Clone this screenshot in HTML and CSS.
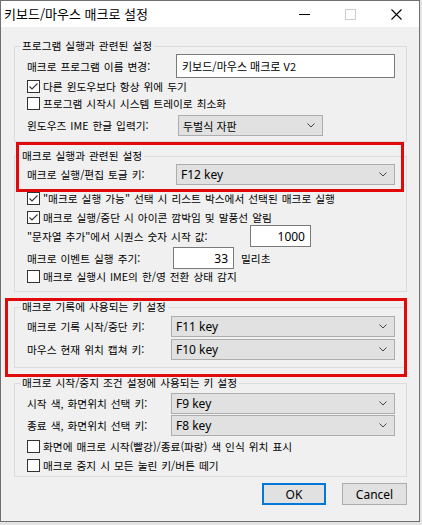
FILE: index.html
```html
<!DOCTYPE html>
<html lang="ko">
<head>
<meta charset="utf-8">
<title>키보드/마우스 매크로 설정</title>
<link rel="stylesheet" href="styles.css">
</head>
<body>
<div class="window">
  <div class="titlebar">
    <span class="title">키보드/마우스 매크로 설정</span>
    <div class="tbtns">
      <span class="tbtn"><svg width="11" height="11" viewBox="0 0 11 11"><line x1="0" y1="5.5" x2="11" y2="5.5" stroke="#000" stroke-width="1"/></svg></span>
      <span class="tbtn"><svg width="11" height="11" viewBox="0 0 11 11"><rect x="0.5" y="0.5" width="10" height="10" fill="none" stroke="#cccccc" stroke-width="1"/></svg></span>
      <span class="tbtn"><svg width="11" height="11" viewBox="0 0 11 11"><path d="M0.5 0.5 L10.5 10.5 M10.5 0.5 L0.5 10.5" stroke="#000" stroke-width="1.1" fill="none"/></svg></span>
    </div>
  </div>
  <div class="client">
    <div class="group g1">
      <div class="gtitle">프로그램 실행과 관련된 설정</div>
      <div class="row h24"><span class="lbl" style="width:149px">매크로 프로그램 이름 변경:</span><div class="textbox ko w219">키보드/마우스 매크로 V2</div></div>
      <div class="row cbrow mt2"><span class="cb checked"><svg width="11" height="11" viewBox="0 0 11 11"><path d="M1.5 5.5 L4 8 L9.5 2.5" fill="none" stroke="#333" stroke-width="1.1"/></svg></span><span class="lbl">다른 윈도우보다 항상 위에 두기</span></div>
      <div class="row cbrow mt4"><span class="cb"></span><span class="lbl">프로그램 시작시 시스템 트레이로 최소화</span></div>
      <div class="row h21 mt5"><span class="lbl" style="width:151px">윈도우즈 IME 한글 입력기:</span><div class="combo ko w145"><span>두벌식 자판</span><svg class="chev" width="8" height="5" viewBox="0 0 8 5"><path d="M0.5 0.5 L4 4 L7.5 0.5" fill="none" stroke="#444" stroke-width="1"/></svg></div></div>
    </div>

    <div class="group g2">
      <div class="gtitle">매크로 실행과 관련된 설정</div>
      <div class="row h21"><span class="lbl" style="width:149px">매크로 실행/편집 토글 키:</span><div class="combo w219"><span>F12 key</span><svg class="chev" width="8" height="5" viewBox="0 0 8 5"><path d="M0.5 0.5 L4 4 L7.5 0.5" fill="none" stroke="#444" stroke-width="1"/></svg></div></div>
      <div class="row cbrow mt7"><span class="cb checked"><svg width="11" height="11" viewBox="0 0 11 11"><path d="M1.5 5.5 L4 8 L9.5 2.5" fill="none" stroke="#333" stroke-width="1.1"/></svg></span><span class="lbl">"매크로 실행 가능" 선택 시 리스트 박스에서 선택된 매크로 실행</span></div>
      <div class="row cbrow mt6"><span class="cb checked"><svg width="11" height="11" viewBox="0 0 11 11"><path d="M1.5 5.5 L4 8 L9.5 2.5" fill="none" stroke="#333" stroke-width="1.1"/></svg></span><span class="lbl">매크로 실행/중단 시 아이콘 깜박임 및 말풍선 알림</span></div>
      <div class="row h22 mt1"><span class="lbl" style="width:223px">"문자열 추가"에서 시퀀스 숫자 시작 값:</span><div class="textbox num w61">1000</div></div>
      <div class="row h22"><span class="lbl" style="width:146px">매크로 이벤트 실행 주기:</span><div class="textbox num w61">33</div><span class="lbl unit">밀리초</span></div>
      <div class="row cbrow mt1"><span class="cb"></span><span class="lbl">매크로 실행시 IME의 한/영 전환 상태 감지</span></div>
    </div>

    <div class="group g3">
      <div class="gtitle">매크로 기록에 사용되는 키 설정</div>
      <div class="row h21 mt1"><span class="lbl" style="width:144px">매크로 기록 시작/중단 키:</span><div class="combo w224"><span>F11 key</span><svg class="chev" width="8" height="5" viewBox="0 0 8 5"><path d="M0.5 0.5 L4 4 L7.5 0.5" fill="none" stroke="#444" stroke-width="1"/></svg></div></div>
      <div class="row h21 mt2"><span class="lbl" style="width:144px">마우스 현재 위치 캡쳐 키:</span><div class="combo w224"><span>F10 key</span><svg class="chev" width="8" height="5" viewBox="0 0 8 5"><path d="M0.5 0.5 L4 4 L7.5 0.5" fill="none" stroke="#444" stroke-width="1"/></svg></div></div>
    </div>

    <div class="group g4">
      <div class="gtitle">매크로 시작/중지 조건 설정에 사용되는 키 설정</div>
      <div class="row h21 mt2"><span class="lbl" style="width:144px">시작 색, 화면위치 선택 키:</span><div class="combo w224"><span>F9 key</span><svg class="chev" width="8" height="5" viewBox="0 0 8 5"><path d="M0.5 0.5 L4 4 L7.5 0.5" fill="none" stroke="#444" stroke-width="1"/></svg></div></div>
      <div class="row h21 mt1"><span class="lbl" style="width:144px">종료 색, 화면위치 선택 키:</span><div class="combo w224"><span>F8 key</span><svg class="chev" width="8" height="5" viewBox="0 0 8 5"><path d="M0.5 0.5 L4 4 L7.5 0.5" fill="none" stroke="#444" stroke-width="1"/></svg></div></div>
      <div class="row cbrow mt4"><span class="cb"></span><span class="lbl">화면에 매크로 시작(빨강)/종료(파랑) 색 인식 위치 표시</span></div>
      <div class="row cbrow mt6"><span class="cb"></span><span class="lbl">매크로 중지 시 모든 눌린 키/버튼 떼기</span></div>
    </div>

    <div class="buttons">
      <button class="btn default">OK</button>
      <button class="btn cancel">Cancel</button>
    </div>
  </div>
  <div class="mark mark1"></div>
  <div class="mark mark2"></div>
</div>
</body>
</html>
```
FILE: styles.css
```css
html, body {
  margin: 0;
  padding: 0;
  background: #e4e4e4;
}
body {
  width: 422px;
  height: 525px;
  overflow: hidden;
  font-family: "Noto Sans CJK KR", "Noto Sans", sans-serif;
  color: #000;
}
.window {
  position: relative;
  box-sizing: border-box;
  width: 420px;
  height: 522px;
  border: 1px solid #6f6f6f;
  background: #f0f0f0;
}
.titlebar {
  height: 26px;
  background: #fff;
  display: flex;
  align-items: center;
  justify-content: space-between;
}
.title {
  padding-left: 3px;
  font-size: 13px;
  line-height: 16px;
  margin-top: -1px;
}
.tbtns {
  display: flex;
  height: 26px;
}
.tbtn {
  width: 46px;
  height: 26px;
  display: flex;
  align-items: center;
  justify-content: center;
}
.tbtn svg { display: block; margin-top: 1px; }
.client {
  padding: 19px 0 0 13px;
}
.group {
  box-sizing: border-box;
  width: 393px;
  border: 1px solid #dcdcdc;
  padding: 0 11px 0 12px;
}
.g1 { padding-bottom: 5px; }
.g2 { margin-top: 14px; padding-bottom: 8px; }
.g3 { margin-top: 15px; padding-bottom: 7px; }
.g4 { margin-top: 15px; padding-bottom: 4px; }
.gtitle {
  width: max-content;
  margin: -9px 0 0 -7px;
  padding: 0 2px;
  height: 16px;
  line-height: 16px;
  background: #f0f0f0;
  font-size: 10.7px;
  word-spacing: 1px;
  white-space: nowrap;
}
.row {
  display: flex;
  align-items: center;
  white-space: nowrap;
}
.h24 { height: 24px; }
.h22 { height: 22px; }
.h21 { height: 21px; }
.cbrow { height: 13px; }
.mt1 { margin-top: 1px; }
.mt2 { margin-top: 2px; }
.mt4 { margin-top: 4px; }
.mt5 { margin-top: 5px; }
.mt6 { margin-top: 6px; }
.mt7 { margin-top: 7px; }
.lbl {
  font-size: 10.7px;
  line-height: 13px;
  word-spacing: 1px;
  flex: none;
}
.cb {
  box-sizing: border-box;
  width: 13px;
  height: 13px;
  border: 1px solid #333;
  background: #fff;
  margin-right: 3px;
  flex: none;
  display: flex;
  align-items: center;
  justify-content: center;
}
.cb svg { display: block; }
.textbox {
  box-sizing: border-box;
  height: 100%;
  border: 1px solid #7a7a7a;
  background: #fff;
  padding: 0 5px;
  display: flex;
  align-items: center;
  font-family: "Noto Sans", "Noto Sans CJK KR", sans-serif;
  font-size: 12px;
}
.textbox.ko {
  font-family: "Noto Sans CJK KR", sans-serif;
  font-size: 11px;
}
.textbox.num { justify-content: flex-end; padding-right: 5px; }
.w219 { width: 219px; }
.w145 { width: 145px; }
.w224 { width: 224px; }
.w61 { width: 61px; }
.unit { margin-left: 7px; }
.combo {
  box-sizing: border-box;
  height: 100%;
  border: 1px solid #adadad;
  background: #e1e1e1;
  display: flex;
  align-items: center;
  justify-content: space-between;
  padding: 0 7px 0 4px;
  font-family: "Noto Sans", "Noto Sans CJK KR", sans-serif;
  font-size: 12px;
}
.combo.ko {
  font-family: "Noto Sans CJK KR", sans-serif;
  font-size: 11px;
}
.chev { display: block; margin-top: -1px; }
.buttons {
  width: 393px;
  margin-top: 6px;
  display: flex;
  justify-content: flex-end;
  gap: 16px;
}
.btn {
  box-sizing: border-box;
  height: 22px;
  background: #e1e1e1;
  font-family: "Noto Sans", sans-serif;
  font-size: 12px;
  color: #000;
  padding: 0;
  margin: 0;
}
.btn.default {
  width: 64px;
  border: 2px solid #0078d7;
}
.btn.cancel {
  width: 65px;
  border: 1px solid #adadad;
}
.mark {
  position: absolute;
  box-sizing: border-box;
  border: 3px solid #e00a0a;
}
.mark1 { left: 15px; top: 141px; width: 388px; height: 50px; }
.mark2 { left: 4px; top: 297px; width: 402px; height: 79px; }
```
